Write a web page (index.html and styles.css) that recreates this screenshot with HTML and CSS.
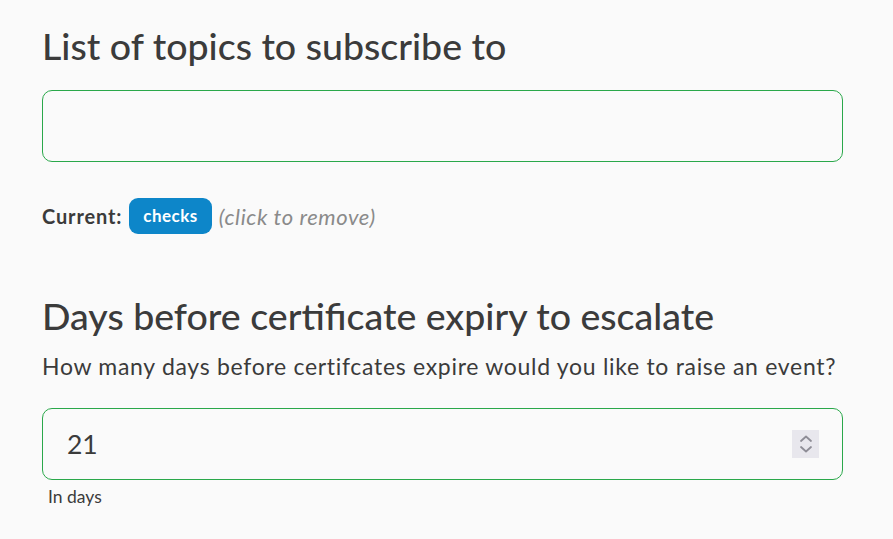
FILE: index.html
```html
<!DOCTYPE html>
<html lang="en">
<head>
    <meta charset="UTF-8">
    <meta name="viewport" content="width=device-width, initial-scale=1.0">
    <title>Check settings</title>
    <link rel="stylesheet" href="styles.css">
</head>
<body>
    <div class="container">
        <section class="field">
            <h2>List of topics to subscribe to</h2>
            <div class="input-box">
                <input type="text" id="topics" aria-label="List of topics to subscribe to">
            </div>
            <div class="current">
                <strong>Current:</strong>
                <button class="tag">checks</button>
                <em>(click to remove)</em>
            </div>
        </section>

        <section class="field">
            <h2>Days before certificate expiry to escalate</h2>
            <p class="description">How many days before certifcates expire would you like to raise an event?</p>
            <div class="input-box">
                <input type="number" id="days" value="21" aria-label="Days before certificate expiry">
                <span class="spinner">
                    <svg width="14" height="22" viewBox="0 0 14 22" fill="none" stroke="#8e8d96" stroke-width="1.8" stroke-linecap="round" stroke-linejoin="round">
                        <path d="M2 8 L7 3.5 L12 8"/>
                        <path d="M2 14 L7 18.5 L12 14"/>
                    </svg>
                </span>
            </div>
            <p class="hint">In days</p>
        </section>
    </div>
</body>
</html>
```

FILE: styles.css
```css
:root {
    --text-color: #3b3b3b;
    --border-color: #2aa84a;
    --tag-color: #0d86c9;
    --bg-color: #fafafa;
}

* {
    box-sizing: border-box;
    margin: 0;
    padding: 0;
    font-family: 'Lato', 'Open Sans', sans-serif;
}

body {
    background-color: var(--bg-color);
    color: var(--text-color);
}

.container {
    padding: 23px 50px 0 42px;
}

.field h2 {
    font-size: 37.5px;
    font-weight: 500;
    line-height: 45px;
    margin-bottom: 22px;
}

.input-box {
    display: flex;
    align-items: center;
    height: 72px;
    border: 1px solid var(--border-color);
    border-radius: 10px;
    padding: 0 23px 0 24px;
}

.input-box input {
    flex: 1;
    min-width: 0;
    border: none;
    outline: none;
    background: transparent;
    font-size: 26.5px;
    color: var(--text-color);
    -moz-appearance: textfield;
}

.input-box input::-webkit-outer-spin-button,
.input-box input::-webkit-inner-spin-button {
    -webkit-appearance: none;
    margin: 0;
}

.spinner {
    display: flex;
    align-items: center;
    justify-content: center;
    width: 27px;
    height: 28px;
    background-color: #e8e7ed;
}

.current {
    display: flex;
    align-items: center;
    gap: 7px;
    margin-top: 36px;
}

.current strong {
    font-size: 20px;
    font-weight: 700;
    letter-spacing: 0.85px;
}

.tag {
    border: none;
    border-radius: 9px;
    background-color: var(--tag-color);
    color: white;
    font-weight: 700;
    font-size: 17px;
    line-height: 20px;
    letter-spacing: 0.5px;
    padding: 8px 14px;
    cursor: pointer;
}

.current em {
    color: #8a8a8a;
    font-size: 22px;
    letter-spacing: 0.6px;
}

.field + .field {
    margin-top: 59px;
}

.field + .field h2 {
    margin-bottom: 14px;
}

.description {
    font-size: 23px;
    line-height: 28px;
    letter-spacing: 0.7px;
    margin-bottom: 28px;
}

.hint {
    font-size: 17.5px;
    line-height: 21px;
    margin: 6px 0 0 6px;
}
```
